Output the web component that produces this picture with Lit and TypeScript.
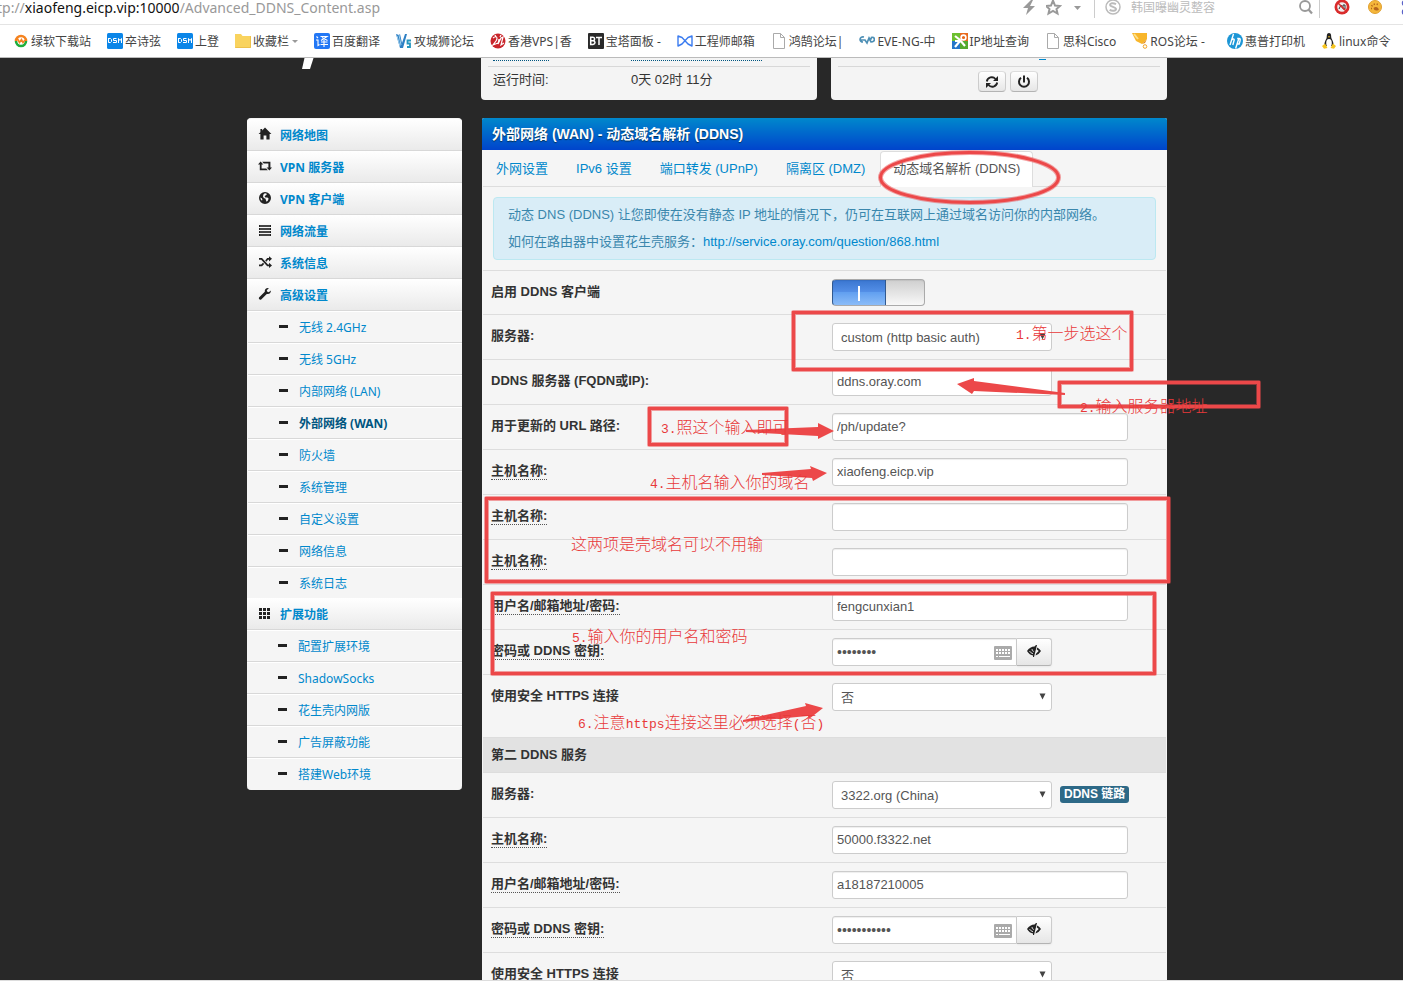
import { LitElement, html, svg, css, nothing, TemplateResult } from "lit";
import { customElement, property } from "lit/decorators.js";
import { classMap } from "lit/directives/class-map.js";

const menuIcons: Record<string, TemplateResult> = {
  home: svg`<path d="M7 0.6 13.4 7H11.6V12.6H8.4V8.6H5.6V12.6H2.4V7H0.6L2.4 5.2V2H4.2V3.4Z"/>`,
  vpn: svg`<path d="M2.6 2.4 5.4 5.4H3.6V9.4H8.2L9.8 11.2H1.8V5.4H0Z"/><path d="M11.4 11.6 8.6 8.6H10.4V4.6H5.8L4.2 2.8H12.4V8.6H14Z"/>`,
  globe: svg`<path fill-rule="evenodd" d="M7 1A6 6 0 1 0 7 13 6 6 0 0 0 7 1ZM6.8 2.2 8.4 2.4 8.8 3.6 7.4 4.4 6.6 5.6 7.4 6.6 9.4 6.4 10.6 7.6 10 9.4 8.6 10.8 7.8 9 7.6 7.8 5.8 7 5 5.4 5.4 3.4ZM2.4 6.4 3.8 7.2 4.4 8.6 4 9.8 2.8 8.6Z"/>`,
  tasks: svg`<path d="M1 2H13V4H1ZM1 5H13V7H1ZM1 8H13V10H1ZM1 11H13V13H1Z"/><path d="M2 3H12M2 6H12M2 9H12M2 12H12" stroke="#999" stroke-width="0.6"/>`,
  random: svg`<path d="M1 3H4L10 9.6H11V7.8L14 10.4 11 13V11.3H9.2L3.2 4.8H1Z"/><path d="M1 11.3H4L6.2 9 5 7.7 3.2 9.6H1ZM7.2 5.4 9.2 3H11V1.2L14 3.8 11 6.4V4.7H10L8.4 6.7Z"/>`,
  wrench: svg`<path d="M12.8 3.6 10.8 5.2 9 4.6 8.8 3.2 10.8 1.2C8.6 0.6 6.4 2.2 6.8 4.8L1 10.6C0.2 11.6 2 13.6 3.2 12.6L8.8 7C11.4 7.6 13.2 5.8 12.8 3.6Z"/>`,
  grid: svg`<path d="M1 2H4V5H1ZM5 2H8V5H5ZM9 2H12V5H9ZM1 6H4V9H1ZM5 6H8V9H5ZM9 6H12V9H9ZM1 10H4V13H1ZM5 10H8V13H5ZM9 10H12V13H9Z"/>`,
};

const pageIcon = svg`<path d="M2.5 .5H9.5L13.5 4.5V15.5H2.5ZM9.5 .5V4.5H13.5" fill="#fff" stroke="#aaa"/>`;
const dsmIcon = svg`<rect width="16" height="16" rx="1.5" fill="#0b86e8"/><g fill="none" stroke="#fff"><path d="M1 5.5H3.5L4.5 6.5V8.5L3.5 9.5H1.5V5.5"/><path d="M9.5 5.5H6.5V7.5H9.5V9.5H6"/><path d="M11.5 10V5.5L13 7.5 14.5 5.5V10"/></g>`;

interface Bookmark { text: string; icon: TemplateResult; more?: boolean; }

const bookmarks: Bookmark[] = [
  { text: "绿软下载站", icon: svg`<path d="M3 8A5 5 0 0 1 13 8" fill="none" stroke="#f5831f" stroke-width="2.6"/><path d="M3 8A5 5 0 0 0 13 8" fill="none" stroke="#1fae3c" stroke-width="2.6"/><path d="M4 5 6.5 9.5 8.5 6.5 10 9.5 12 7" fill="none" stroke="#f5831f" stroke-width="1.6"/>` },
  { text: "卒诗弦", icon: dsmIcon },
  { text: "上登", icon: dsmIcon },
  { text: "收藏栏", more: true, icon: svg`<path d="M0 1H6L7.5 3H16V15H0Z" fill="#f9d35e"/><path d="M0.5 14.5H15.5V3" fill="none" stroke="#edc04a"/>` },
  { text: "百度翻译", icon: svg`<rect width="16" height="16" rx="2" fill="#2277f5"/><g fill="none" stroke="#fff" stroke-width="1.1"><path d="M2.5 3.5 4 5M2 7H4V12.5L5.5 11.5M6.5 3.5H13L7 7.5M8 4.5 13.5 7.5M10 7V14M7 9H13.5M6.5 11.5H14"/></g>` },
  { text: "攻城狮论坛", icon: svg`<path d="M0 1 3 2 4 1 6 10 9 1H11L7 15H4Z" fill="#2d7fc4"/><path d="M1 3 4 13M3 2 5 12" stroke="#9fd0ee"/><path d="M15 7.5H11.5V10.5H14V14H11" fill="none" stroke="#2596be" stroke-width="1.8"/>` },
  { text: "香港VPS|香", icon: svg`<circle cx="8" cy="8" r="7.5" fill="#c9252b"/><path d="M3 5C7 2 8 5 6 8L3 12 8 10M9 6 8 11 11 5 13 4 11 12 14 10M5 2 6 4M11 2 10 4" fill="none" stroke="#fff" stroke-width="1.2"/>` },
  { text: "宝塔面板 -", icon: svg`<rect width="16" height="16" rx="1" fill="#2a2a2a"/><path d="M2.7 4.2V11.5H5Q7 11.3 7 9.6 7 8 5 7.8H3 5Q6.6 7.5 6.6 6 6.6 4.2 5 4.2ZM8 4.5H14M11 4.5V12" fill="none" stroke="#fff" stroke-width="1.5"/>` },
  { text: "工程师邮箱", icon: svg`<path d="M1 3V13L5 11 11 4.5 15 3V13L11 11 5 4.5Z" fill="none" stroke="#3b7cf0" stroke-width="1.4" stroke-linejoin="round"/>` },
  { text: "鸿鹄论坛|", icon: pageIcon },
  { text: "EVE-NG-中", icon: svg`<path d="M5 4C0 3 0 9 4 9M2 7H6L8 10 10 5 12 9C17 9 16 3 12 4.5M10 5 13 6" fill="none" stroke="#4d8fb5" stroke-width="1.7"/>` },
  { text: "IP地址查询", icon: svg`<path d="M0 0H8V8H0Z" fill="#6cbf2f"/><path d="M8 0H16V8H8Z" fill="#e8691d"/><path d="M0 8H8V16H0Z" fill="#2475c9"/><path d="M8 8H16V16H8Z" fill="#54a92c"/><path d="M3 3 8 7 13 13M8 8 3 14M3 8H8" stroke="#fff" stroke-width="2.2"/><circle cx="11.5" cy="4.5" r="2.4" fill="none" stroke="#fff" stroke-width="1.6"/>` },
  { text: "思科Cisco", icon: pageIcon },
  { text: "ROS论坛 -  ", icon: svg`<path d="M0 0H15L15 6 10 11 4 8Z" fill="#f8b62b"/><path d="M2 1 6 6" stroke="#fde08a" stroke-width="2"/><path d="M10 11 15 6 13 10Z" fill="#e08a1e"/><circle cx="13" cy="13.5" r="1.8" fill="none" stroke="#f0a52c"/>` },
  { text: "惠普打印机", icon: svg`<circle cx="8" cy="8" r="8" fill="#1c96d6"/><path d="M6.5 1 3 12M4.2 7.5Q7 4.5 7.2 7L5.8 12M12 5 8.6 15.5M10.2 5.5H12Q13.8 5.5 13 8L12.2 11H9.5" fill="none" stroke="#fff" stroke-width="1.4"/>` },
  { text: "linux命令", icon: svg`<path d="M8 0C5.5 0 6 3 5.6 5 5 7 3 9 3.6 13H12.4C13 9 11 7 10.4 5 10 3 10.5 0 8 0Z" fill="#222"/><ellipse cx="8" cy="10" rx="2.8" ry="4" fill="#fff"/><path d="M1 13 4 10.5 6.5 15 3 15.8ZM15 13 12 10.5 9.5 15 13 15.8Z" fill="#f7c51e"/><path d="M6.8 3.6 8 3.2 9.2 3.6 8 4.8Z" fill="#f7c51e"/>` },
];

const mainMenu: [string, string][] = [
  ["home", "网络地图"], ["vpn", "VPN 服务器"], ["globe", "VPN 客户端"],
  ["tasks", "网络流量"], ["random", "系统信息"], ["wrench", "高级设置"],
];
const advancedMenu = ["无线 2.4GHz", "无线 5GHz", "内部网络 (LAN)", "外部网络 (WAN)", "防火墙", "系统管理", "自定义设置", "网络信息", "系统日志"];
const extensionMenu = ["配置扩展环境", "ShadowSocks", "花生壳内网版", "广告屏蔽功能", "搭建Web环境"];
const tabs = ["外网设置", "IPv6 设置", "端口转发 (UPnP)", "隔离区 (DMZ)", "动态域名解析 (DDNS)"];

const latinCjk = css`"Noto Sans", "Noto Sans CJK SC", sans-serif`;
const arialCjk = css`"Liberation Sans", "Noto Sans CJK SC", sans-serif`;

@customElement("browser-bar")
export class BrowserBar extends LitElement {
  static styles = css`
    :host { display: block; background: #fff; font: 12px/16px ${latinCjk}; overflow: hidden; }
    .address { display: flex; align-items: flex-start; height: 24px; border-bottom: 1px solid #e4e4e4; }
    .url { flex: 1; margin-left: -3px; font-size: 14px; color: #999; white-space: pre; }
    .host { color: #111; }
    .tools { display: flex; gap: 8px; }
    .tool { display: block; width: 16px; height: 16px; }
    button { padding: 0; border: 0; background: none; }
    .search { display: flex; width: 226px; gap: 10px; margin-left: 8px; padding: 0 6px 2px 10px; border: solid #ccc; border-width: 0 1px; box-sizing: border-box; }
    input { flex: 1; min-width: 0; height: 16px; padding: 0; border: 0; outline: 0; font: inherit; }
    input::placeholder { color: #bbb; opacity: 1; }
    .extras { display: flex; gap: 17px; width: 69px; margin-left: 14px; overflow: hidden; flex-shrink: 0; }
    .extras .tool { flex-shrink: 0; }
    .bookmarks { display: flex; gap: 16px; height: 32px; align-items: center; padding-left: 13px; border-bottom: 1px solid #bbb; white-space: pre; }
    .bookmarks a { display: flex; align-items: center; gap: 2px; color: #444; text-decoration: none; }
    .bookmarks span { padding-top: 2px; }
    .caret { width: 6px; height: 3px; margin-left: 1px; }
  `;

  render() {
    return html`
      <div class="address">
        <div class="url">tp://<span class="host">xiaofeng.eicp.vip:10000</span>/Advanced_DDNS_Content.asp</div>
        <div class="tools">
          <button aria-label="闪电"><svg class="tool" viewBox="0 0 16 16"><path d="M9 0 1 8H6L4 15 13 6H8L11 0Z" fill="#999"/></svg></button>
          <button aria-label="收藏"><svg class="tool" viewBox="0 0 16 16"><path d="M7 .5 9 5.5 14 6 10.5 9 11.5 13.5 7 11 2.5 13.5 3.5 9 0 6 5 5.5Z" fill="none" stroke="#999" stroke-width="2"/></svg></button>
          <button aria-label="更多"><svg class="tool" viewBox="0 0 16 16"><path d="M4 6H11L7.5 10Z" fill="#999"/></svg></button>
        </div>
        <div class="search">
          <svg class="tool" viewBox="0 0 16 16"><circle cx="8" cy="7" r="7" fill="none" stroke="#bbb" stroke-width="1.5"/><path d="M11 4.2C8 2.6 5 3.2 5 5S11 7 11 9 7 11.2 4.6 9.8" fill="none" stroke="#bbb" stroke-width="2"/></svg>
          <input aria-label="搜索" placeholder="韩国曝幽灵整容">
          <svg class="tool" viewBox="0 0 16 16"><circle cx="8" cy="6" r="5" fill="none" stroke="#999" stroke-width="1.8"/><path d="M11.5 9.5 15 13.5" stroke="#999" stroke-width="2.2"/></svg>
        </div>
        <div class="extras">
          <svg class="tool" viewBox="0 0 16 16"><circle cx="8" cy="7" r="7.5" fill="#d92b2b"/><circle cx="8" cy="7" r="4.8" fill="#eee"/><path d="M5 9 7 5 8.5 8M9 5H11V9H9Z" fill="none" stroke="#333"/><path d="M4 3 12 11" stroke="#d92b2b" stroke-width="1.6"/></svg>
          <svg class="tool" viewBox="0 0 16 16"><circle cx="8" cy="7" r="6.5" fill="#f5b73b" stroke="#e0a030"/><path d="M6.5 8Q9 6 11 8T10 10.5Q7 11 6.5 8" fill="#b5651d"/><path d="M4.5 5 5.5 6.5M7 3.5 7.5 5M10.5 3.5 10 5M4 8.5H5" fill="none" stroke="#b5651d" stroke-width="1.3"/></svg>
          <svg class="tool" viewBox="0 0 16 16"><circle cx="5" cy="3" r="2.5" fill="none" stroke="#5a62c8" stroke-width="1.5"/><circle cx="5" cy="12" r="2.5" fill="none" stroke="#5a62c8" stroke-width="1.5"/></svg>
        </div>
      </div>
      <nav class="bookmarks">${bookmarks.map((b) => html`<a href="#"><svg width="16" height="16" viewBox="0 0 16 16">${b.icon}</svg><span>${b.text}</span>${b.more ? html`<svg class="caret" viewBox="0 0 6 3"><path d="M0 0H6L3 3Z" fill="#999"/></svg>` : nothing}</a>`)}</nav>`;
  }
}

@customElement("side-menu")
export class SideMenu extends LitElement {
  static styles = css`
    :host { display: block; font: 12px/18px ${latinCjk}; }
    .menu { background: #f5f5f5; border: solid #f5f5f5; border-width: 1px 0; border-radius: 4px; overflow: hidden; }
    a { display: flex; align-items: center; box-sizing: border-box; height: 32px; color: #08c; text-decoration: none; border-bottom: 1px solid #d8d8d8; }
    .top { gap: 8px; padding: 3px 0 0 11px; font-weight: bold; background: linear-gradient(#fff, #eaeaea); }
    .top svg { width: 14px; height: 14px; fill: #222; margin-bottom: 4px; }
    .sub { border-top: 1px solid #fff; padding: 2px 0 0 31px; gap: 11px; }
    .sub svg { width: 9px; height: 3px; fill: #222; margin-bottom: 4px; }
    .inset { padding-left: 1px; }
    .group .sub:last-child { height: 31px; border-bottom: 0; }
    .active { color: #005580; font-weight: bold; }
  `;

  private sub(text: string) {
    return html`<a href="#" class=${classMap({ sub: true, active: text === "外部网络 (WAN)" })}><svg viewBox="0 0 9 3"><path d="M0 0H9V3H0Z"/></svg>${text}</a>`;
  }

  private top(icon: string, text: string) {
    return html`<a href="#" class="top"><svg viewBox="0 0 14 14">${menuIcons[icon]}</svg>${text}</a>`;
  }

  render() {
    return html`<nav class="menu">
      ${mainMenu.map(([icon, text]) => this.top(icon, text))}
      <div class="group inset">${advancedMenu.map((t) => this.sub(t))}</div>
      ${this.top("grid", "扩展功能")}
      <div class="group">${extensionMenu.map((t) => this.sub(t))}</div>
    </nav>`;
  }
}

@customElement("status-panels")
export class StatusPanels extends LitElement {
  static styles = css`
    :host { display: grid; grid-template-columns: 1fr 1fr; gap: 14px; font: 13px/20px ${arialCjk}; color: #333; }
    .panel { height: 42px; padding: 0 7px; box-sizing: border-box; background: #f4f4f4; border-radius: 0 0 4px 4px; }
    .cut { display: flex; height: 8px; border-bottom: 1px solid #d8d8d8; padding-left: 5px; box-sizing: content-box; }
    .dots { height: 2px; border-bottom: 1px dotted #005580; }
    .key { width: 138px; flex-shrink: 0; }
    .key .dots { width: 56px; }
    .val .dots { width: 131px; }
    .line { display: flex; padding: 3px 0 0 5px; }
    .dash { width: 7px; height: 1px; margin: 1px 0 0 196px; background: #08c; }
    .buttons { display: flex; gap: 4px; padding: 4px 0 0 140px; }
    button { width: 28px; height: 21px; padding: 0; display: grid; place-items: center; border: 1px solid #ccc; border-color: #ddd #ccc #b3b3b3; border-radius: 4px; background: linear-gradient(#fff, #e6e6e6); }
  `;

  render() {
    return html`
      <section class="panel">
        <div class="cut"><div class="key"><div class="dots"></div></div><div class="val"><div class="dots"></div></div></div>
        <div class="line"><span class="key">运行时间:</span><span>0天 02时 11分</span></div>
      </section>
      <section class="panel">
        <div class="cut"><div class="dash"></div></div>
        <div class="buttons">
          <button aria-label="刷新"><svg width="14" height="14" viewBox="0 0 14 14"><path d="M1.8 6.5A5 5 0 0 1 10.5 4M12.2 7.5A5 5 0 0 1 3.5 10" fill="none" stroke="#222" stroke-width="1.8"/><path d="M13 1V6H8ZM1 13V8H6Z" fill="#222"/></svg></button>
          <button aria-label="电源"><svg width="14" height="14" viewBox="0 0 14 14"><path d="M4 2.8A5 5 0 1 0 10 2.8" fill="none" stroke="#222" stroke-width="2"/><path d="M7 .5V7.5" stroke="#222" stroke-width="2"/></svg></button>
        </div>
      </section>`;
  }
}

@customElement("form-row")
export class FormRow extends LitElement {
  @property() label = "";
  @property() kind = "text";
  @property() value = "";
  @property({ type: Boolean }) hint = false;
  @property({ type: Boolean }) narrow = false;
  @property() badge = "";

  static styles = css`
    :host { display: grid; grid-template-columns: 341px 1fr; border-top: 1px solid #ddd; font: 13px/18px ${arialCjk}; color: #333; }
    .name { padding: 12px 8px 11px; font-weight: bold; white-space: nowrap; }
    .name label { display: inline-block; line-height: 17px; }
    .hint { border-bottom: 1px dotted #555; }
    .field { display: flex; align-items: center; padding: 8px; }
    input, select { font: inherit; color: #555; box-sizing: border-box; height: 28px; margin: 0; border: 1px solid #ccc; border-radius: 3px; background: #fff; box-shadow: inset 0 1px 1px rgba(0, 0, 0, 0.07); outline: 0; }
    .text { width: 296px; padding: 0 4px 1px; }
    .narrow { width: 220px; }
    .picker { display: grid; width: 220px; align-items: center; }
    .picker select { grid-area: 1 / 1; appearance: none; width: 100%; padding: 1px 8px 0; box-shadow: none; }
    .picker svg { grid-area: 1 / 1; justify-self: end; width: 7px; height: 7px; margin: 0 6px 2px 0; pointer-events: none; }
    .secret { display: grid; width: 220px; grid-template-columns: 185px 35px; align-items: center; }
    .secret input { grid-area: 1 / 1; padding: 0 28px 1px 4px; border-radius: 3px 0 0 3px; font-size: 14px; }
    .keys { grid-area: 1 / 1; justify-self: end; width: 18px; height: 14px; margin: 1px 5px 0 0; }
    button { height: 28px; padding: 0 0 3px; border: 1px solid #ccc; border-left: 0; border-bottom-color: #b3b3b3; border-radius: 0 3px 3px 0; background: linear-gradient(#fff, #e6e6e6); display: grid; place-items: center; box-shadow: 0 1px 2px rgba(0, 0, 0, 0.05); }
    .toggle { appearance: none; width: 93px; height: 27px; border-radius: 4px; border: 1px solid #aaa; border-left-color: #31598f; background:
      linear-gradient(#fff, #fff) 25px 6px / 2px 15px no-repeat,
      linear-gradient(#31598f, #31598f) 52px 0 / 1px 27px no-repeat,
      linear-gradient(#cfcfcf, #fbfbfb) 53px 0 / 39px 27px no-repeat,
      linear-gradient(#3a76d0, #5590e8 50%, #62a0f0 50%, #8bbcf8); }
    .badge { margin: 0 0 1px 8px; padding: 0 4px; border-radius: 3px; background: #2d6987; color: #fff; font-size: 12px; line-height: 17px; font-weight: bold; text-decoration: none; }
  `;

  private control() {
    switch (this.kind) {
      case "toggle":
        return html`<input id="f" class="toggle" type="checkbox" checked>`;
      case "select":
        return html`<div class="picker"><select id="f"><option>${this.value}</option></select><svg viewBox="0 0 7 7"><path d="M0.5 0.5H6.5L3.5 6.5Z" fill="#444"/></svg></div>`;
      case "password":
        return html`<div class="secret"><input id="f" type="password" .value=${this.value}>
          <svg class="keys" viewBox="0 0 18 14"><rect width="18" height="14" rx="1" fill="#aaa"/><path d="M2 4H16M2 7H16" stroke="#fff" stroke-width="2" stroke-dasharray="2 1"/><path d="M2 10.5H4M5 10.5H16" stroke="#fff"/></svg>
          <button aria-label="显示密码"><svg width="14" height="14" viewBox="0 0 14 14"><path d="M0 7Q3 2.5 7.5 2.5L9 1H10L7 13H6V11.5Q2.5 11 0 7Z" fill="#222"/><path d="M2.5 7Q3.5 9 6 9.7M5 5Q4.800 7 6.8 7.5" fill="none" stroke="#fff" stroke-width="0.8"/><path d="M10.3 3.5Q12.5 4.5 14 7 12 10.5 8.5 11.5L9 9.7 11.7 7 9.7 5.3Z" fill="#222"/></svg></button></div>`;
      default:
        return html`<input id="f" type="text" class=${classMap({ text: true, narrow: this.narrow })} .value=${this.value}>`;
    }
  }

  render() {
    return html`
      <div class="name"><label for="f" class=${classMap({ hint: this.hint })}>${this.label}</label></div>
      <div class="field">${this.control()}${this.badge ? html`<a href="#" class="badge">${this.badge}</a>` : nothing}</div>`;
  }
}

@customElement("note-layer")
export class NoteLayer extends LitElement {
  static styles = css`
    :host { display: block; pointer-events: none; }
    svg { display: block; overflow: visible; }
    .halo { fill: none; stroke: #ec4849; stroke-width: 5px; stroke-opacity: 0.5; stroke-linejoin: round; }
    .core { fill: none; stroke: #ec4849; stroke-width: 3px; }
    .arrow { fill: #ec4849; }
    .note { fill: #e8393a; font: 300 16px "Noto Sans CJK SC", sans-serif; }
    .half { font: 13px "Liberation Mono", monospace; }
  `;

  render() {
    const boxes = [
      [793, 312, 338, 57], [1059, 382, 199, 24], [649, 408, 137, 36], [486, 498, 682, 83], [492, 593, 662, 80],
    ];
    const arrows = [
      "957,384 974,378 974,381 1065,393 1065,395 974,391 972,394",
      "834,431 818,423 818,427 746,430 746,432 818,436 818,439",
      "827,473 810,466 811,469 762,473 762,475 812,478 813,481",
      "823,708 805,703 806,706 743,720 743,722 808,716 809,719",
    ];
    const half = (t: string) => svg`<tspan class="half">${t}</tspan>`;
    return html`<svg width="920" height="862" viewBox="247 118 920 862">
      <g transform="translate(0.5 0.5)">${["halo", "core"].map((c) => svg`
        ${boxes.map(([x, y, w, h]) => svg`<rect class=${c} x=${x} y=${y} width=${w} height=${h}/>`)}
        <ellipse class=${c} cx="969" cy="177" rx="89" ry="25"/>`)}</g>
      ${arrows.map((p) => svg`<polygon class="arrow" points=${p}/>`)}
      <text class="note" x="1016" y="339">${half("1.")}第一步选这个</text>
      <text class="note" x="1080" y="412">${half("2.")}输入服务器地址</text>
      <text class="note" x="661" y="433">${half("3.")}照这个输入即可</text>
      <text class="note" x="650" y="488">${half("4.")}主机名输入你的域名</text>
      <text class="note" x="571" y="550">这两项是壳域名可以不用输</text>
      <text class="note" x="572" y="642">${half("5.")}输入你的用户名和密码</text>
      <text class="note" x="578" y="728">${half("6.")}注意${half("https")}连接这里必须选择${half("(")}否${half(")")}</text>
    </svg>`;
  }
}

@customElement("app-root")
export class AppRoot extends LitElement {
  static styles = css`
    :host { display: flex; flex-direction: column; height: 100vh; overflow: hidden; background: #282828; font: 13px/18px ${arialCjk}; }
    browser-bar { flex-shrink: 0; }
    .view { flex: 1; min-height: 0; overflow: hidden; padding-left: 11px; }
    .status { height: 3px; flex-shrink: 0; border-top: 1px solid #ddd; background: #fff; }
    .page { width: 920px; margin: 0 auto; }
    .head { display: grid; grid-template-columns: 215px 1fr; gap: 19px; margin-bottom: 18px; }
    .logo { margin-left: 55px; }
    .body { display: grid; grid-template-columns: 215px 1fr; gap: 20px; align-items: start; position: relative; }
    .notes { position: absolute; top: 0; left: 0; }
    .box { background: #f5f5f5; border-radius: 2px; padding: 0 1px; }
    h1 { margin: 0 -1px; padding: 0 10px; font-size: 14px; line-height: 32px; color: #fff; background: linear-gradient(#08c, #04c); border-radius: 2px 2px 0 0; text-shadow: 0 1px 1px #035; }
    .tabs { display: flex; gap: 2px; padding-top: 1px; border-bottom: 1px solid #ddd; }
    .tab { padding: 8px 12px; border: 1px solid transparent; border-bottom: 0; line-height: 18px; height: 18px; color: #08c; text-decoration: none; white-space: nowrap; }
    .current { color: #555; background: #fff; border-color: #ddd; border-radius: 4px 4px 0 0; margin-bottom: -1px; padding-bottom: 9px; }
    .alert { margin: 10px; padding: 3px 14px 4px; border: 1px solid #bce8f1; border-radius: 4px; background: #d9edf7; color: #3a87ad; line-height: 27px; }
    .alert p { margin: 0; }
    .alert a { color: #08c; text-decoration: none; }
    .last { padding-bottom: 18px; }
    h2 { margin: 0; padding: 0 8px; border-top: 1px solid #ddd; background: #e2e2e2; font-size: 13px; line-height: 34px; color: #333; }
  `;

  render() {
    return html`
      <browser-bar></browser-bar>
      <div class="view"><div class="page">
        <header class="head">
          <svg class="logo" width="14" height="12" viewBox="0 0 14 12"><path d="M2.5 0H11.5L8 11H0Z" fill="#fff"/></svg>
          <status-panels></status-panels>
        </header>
        <div class="body">
          <side-menu></side-menu>
          <main class="box">
            <h1>外部网络 (WAN) - 动态域名解析 (DDNS)</h1>
            <nav class="tabs">${tabs.map((t, i) => html`<a href="#" class=${classMap({ tab: true, current: i === tabs.length - 1 })}>${t}</a>`)}</nav>
            <div class="alert">
              <p>动态 DNS (DDNS) 让您即使在没有静态 IP 地址的情况下，仍可在互联网上通过域名访问你的内部网络。</p>
              <p>如何在路由器中设置花生壳服务：<a href="#">http://service.oray.com/question/868.html</a></p>
            </div>
            <form>
              <form-row label="启用 DDNS 客户端" kind="toggle"></form-row>
              <form-row label="服务器:" kind="select" value="custom (http basic auth)"></form-row>
              <form-row label="DDNS 服务器 (FQDN或IP):" value="ddns.oray.com" narrow></form-row>
              <form-row label="用于更新的 URL 路径:" value="/ph/update?"></form-row>
              <form-row label="主机名称:" hint value="xiaofeng.eicp.vip"></form-row>
              <form-row label="主机名称:" hint></form-row>
              <form-row label="主机名称:" hint></form-row>
              <form-row label="用户名/邮箱地址/密码:" hint value="fengcunxian1"></form-row>
              <form-row label="密码或 DDNS 密钥:" hint kind="password" value="password"></form-row>
              <form-row class="last" label="使用安全 HTTPS 连接" kind="select" value="否"></form-row>
              <h2>第二 DDNS 服务</h2>
              <form-row label="服务器:" kind="select" value="3322.org (China)" badge="DDNS 链路"></form-row>
              <form-row label="主机名称:" hint value="50000.f3322.net"></form-row>
              <form-row label="用户名/邮箱地址/密码:" hint value="a18187210005"></form-row>
              <form-row label="密码或 DDNS 密钥:" hint kind="password" value="password123"></form-row>
              <form-row label="使用安全 HTTPS 连接" kind="select" value="否"></form-row>
            </form>
          </main>
          <note-layer class="notes"></note-layer>
        </div>
      </div></div>
      <div class="status"></div>`;
  }
}
